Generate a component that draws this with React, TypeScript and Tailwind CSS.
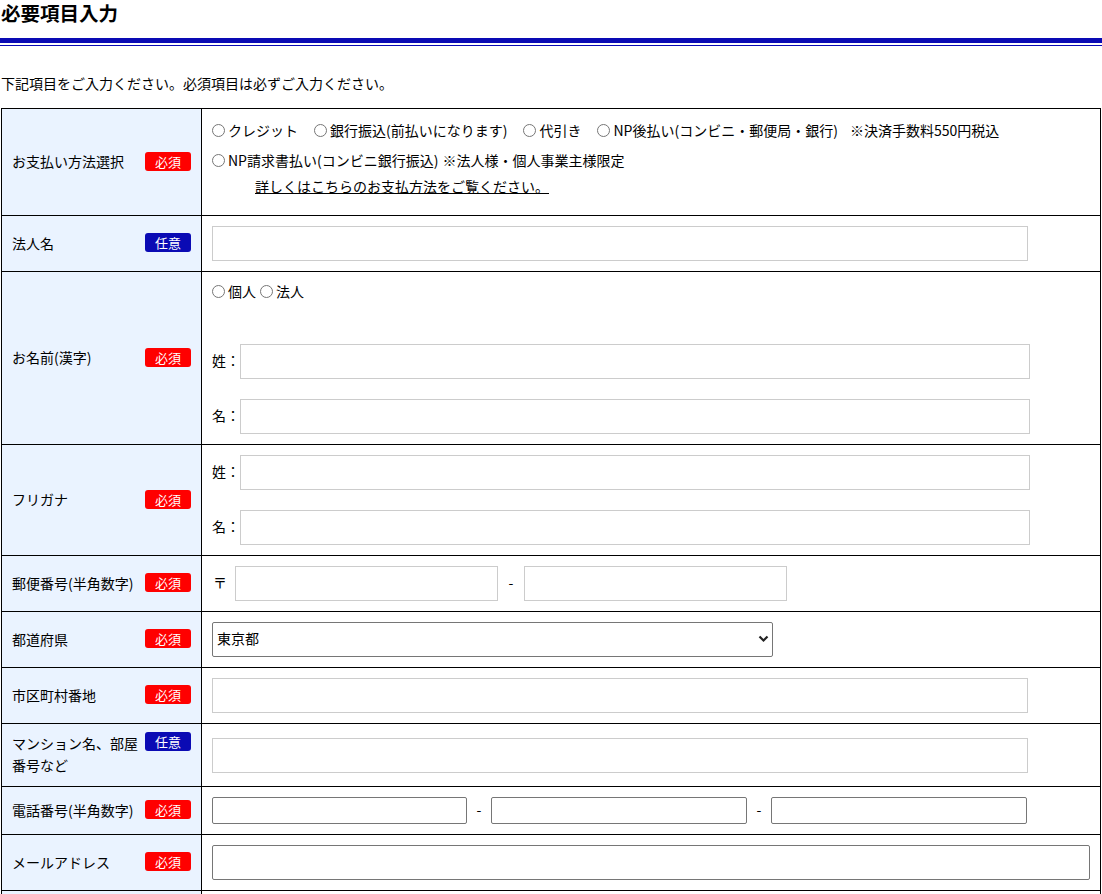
import React from 'react';

const FONT = { fontFamily: '"Noto Sans CJK JP", "Noto Sans", sans-serif' };

function Badge({ required }: { required?: boolean }) {
  return (
    <span
      className={`inline-flex items-center justify-center w-[46px] h-[19px] rounded-[3px] text-[13px] leading-none text-white flex-shrink-0 ${
        required ? 'bg-[#ff0000]' : 'bg-[#0a0ab4]'
      }`}
    >
      {required ? '必須' : '任意'}
    </span>
  );
}

function Label({ text, required, top }: { text: React.ReactNode; required?: boolean; top?: boolean }) {
  return (
    <th className="w-[200px] bg-[#eaf3ff] border border-black px-[10px] text-left font-normal align-middle">
      <div className={`flex justify-between -mt-[2px] ${top ? 'items-start' : 'items-center'}`}>
        <span className="text-[14px] leading-[22px] w-[128px]">{text}</span>
        <Badge required={required} />
      </div>
    </th>
  );
}

const lightInput = 'h-[35px] border border-[#cccccc] bg-white px-1 text-[14px] outline-none';
const darkInput = 'border border-[#767676] rounded-[2px] bg-white px-1 text-[14px] outline-none';

function Radio({ label }: { label: string }) {
  return (
    <label className="inline-flex items-center gap-[3px]">
      <input type="radio" className="w-[13px] h-[13px] m-0 accent-gray-500" />
      <span>{label}</span>
    </label>
  );
}

export default function App() {
  return (
    <div className="bg-white text-black text-[14px] w-[1102px]" style={FONT}>
      <h2 className="text-[19.5px] font-bold leading-[25px] pl-[1px]">必要項目入力</h2>
      <div className="mt-[13px] h-[5px] bg-[#0a0ab4]" />
      <div className="mt-[2px] h-[1px] bg-[#0a0ab4]" />

      <p className="mt-[27px] text-[14px] leading-[20px] pl-[1px]">
        下記項目をご入力ください。必須項目は必ずご入力ください。
      </p>

      <table className="mt-[15px] ml-[1px] w-[1100px] border-collapse border border-black">
        <tbody>
          {/* payment */}
          <tr>
            <Label text="お支払い方法選択" required />
            <td className="border border-black pl-[10px] pt-[8px] pb-[16px] align-top">
              <div className="flex items-center h-[26px] gap-[16px]">
                <Radio label="クレジット" />
                <Radio label="銀行振込(前払いになります)" />
                <Radio label="代引き" />
                <span className="inline-flex items-center">
                  <Radio label="NP後払い(コンビニ・郵便局・銀行)" />
                  <span className="ml-[12px]">※決済手数料550円税込</span>
                </span>
              </div>
              <div className="flex items-center h-[26px] mt-[4px]">
                <Radio label="NP請求書払い(コンビニ銀行振込)" />
                <span className="ml-[4px]">※法人様・個人事業主様限定</span>
              </div>
              <div className="flex items-center h-[26px] pl-[43px]">
                <a className="underline cursor-pointer">詳しくはこちらのお支払方法をご覧ください。</a>
              </div>
            </td>
          </tr>

          {/* corp name */}
          <tr>
            <Label text="法人名" />
            <td className="border border-black px-[10px] py-[10px]">
              <input type="text" className={`${lightInput} w-[816px] block`} />
            </td>
          </tr>

          {/* name kanji */}
          <tr>
            <Label text="お名前(漢字)" required />
            <td className="border border-black px-[10px] py-[10px]">
              <div className="flex items-center h-[20px] gap-[4px] -mt-[1px]">
                <Radio label="個人" />
                <Radio label="法人" />
              </div>
              <div className="flex items-center mt-[43px]">
                <span className="w-[28px] -mt-[2px]">姓：</span>
                <input type="text" className={`${lightInput} w-[790px]`} />
              </div>
              <div className="flex items-center mt-[20px]">
                <span className="w-[28px] -mt-[2px]">名：</span>
                <input type="text" className={`${lightInput} w-[790px]`} />
              </div>
            </td>
          </tr>

          {/* furigana */}
          <tr>
            <Label text="フリガナ" required />
            <td className="border border-black px-[10px] py-[10px]">
              <div className="flex items-center">
                <span className="w-[28px] -mt-[2px]">姓：</span>
                <input type="text" className={`${lightInput} w-[790px]`} />
              </div>
              <div className="flex items-center mt-[20px]">
                <span className="w-[28px] -mt-[2px]">名：</span>
                <input type="text" className={`${lightInput} w-[790px]`} />
              </div>
            </td>
          </tr>

          {/* zip */}
          <tr>
            <Label text="郵便番号(半角数字)" required />
            <td className="border border-black px-[10px] py-[10px]">
              <div className="flex items-center">
                <span className="w-[23px] pl-[1px] -mt-[2px]">〒</span>
                <input type="text" className={`${lightInput} w-[263px]`} />
                <span className="w-[26px] text-center -mt-[2px]">-</span>
                <input type="text" className={`${lightInput} w-[263px]`} />
              </div>
            </td>
          </tr>

          {/* prefecture */}
          <tr>
            <Label text="都道府県" required />
            <td className="border border-black px-[10px] py-[10px]">
              <div className="relative w-[561px] h-[35px]">
                <select className={`${darkInput} w-full h-full appearance-none pl-[4px] pb-[2px]`} defaultValue="東京都">
                  <option>東京都</option>
                </select>
                <svg
                  className="absolute right-[4px] top-[13px] pointer-events-none"
                  width="11"
                  height="8"
                  viewBox="0 0 11 8"
                >
                  <path d="M1.5 1.5 L5.5 5.5 L9.5 1.5" stroke="#222" strokeWidth="2.2" fill="none" />
                </svg>
              </div>
            </td>
          </tr>

          {/* city */}
          <tr>
            <Label text="市区町村番地" required />
            <td className="border border-black px-[10px] py-[10px]">
              <input type="text" className={`${lightInput} w-[816px] block`} />
            </td>
          </tr>

          {/* building */}
          <tr>
            <Label text="マンション名、部屋番号など" top />
            <td className="border border-black px-[10px] pt-[14px] pb-[13px]">
              <input type="text" className={`${lightInput} w-[816px] block`} />
            </td>
          </tr>

          {/* tel */}
          <tr>
            <Label text="電話番号(半角数字)" required />
            <td className="border border-black px-[10px] py-[10px]">
              <div className="flex items-center">
                <input type="text" className={`${darkInput} w-[255px] h-[27px]`} />
                <span className="w-[24px] text-center -mt-[2px]">-</span>
                <input type="text" className={`${darkInput} w-[256px] h-[27px]`} />
                <span className="w-[24px] text-center -mt-[2px]">-</span>
                <input type="text" className={`${darkInput} w-[256px] h-[27px]`} />
              </div>
            </td>
          </tr>

          {/* mail */}
          <tr>
            <Label text="メールアドレス" required />
            <td className="border border-black px-[10px] py-[10px]">
              <input type="text" className={`${darkInput} w-[878px] h-[35px] block`} />
            </td>
          </tr>

          {/* next row (below the fold) */}
          <tr>
            <th className="w-[200px] h-[56px] bg-[#eaf3ff] border border-black" />
            <td className="border border-black" />
          </tr>
        </tbody>
      </table>
    </div>
  );
}
